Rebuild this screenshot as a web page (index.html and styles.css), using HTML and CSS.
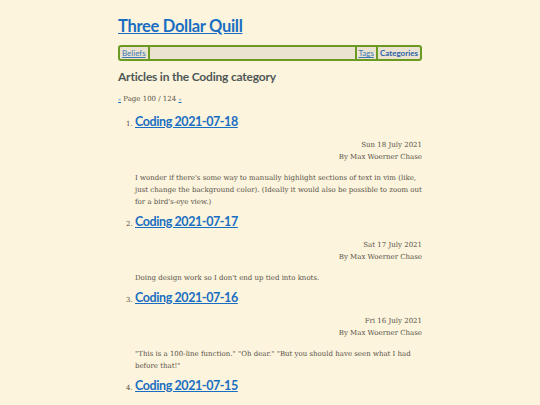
FILE: index.html
```html
<!DOCTYPE html>
<html>
<head>
<meta charset="utf-8">
<link rel="stylesheet" href="styles.css">
</head>
<body>
<div class="page">
  <header class="site-header">
    <h1 class="site-title"><a href="#">Three Dollar Quill</a></h1>
    <nav class="nav">
      <a class="nav-item" href="#">Beliefs</a>
      <span class="nav-spacer"></span>
      <a class="nav-item nav-left" href="#">Tags</a>
      <a class="nav-item nav-left current" href="#">Categories</a>
    </nav>
  </header>
  <h2 class="section-title">Articles in the Coding category</h2>
  <p class="pager"><a href="#">«</a> Page 100 / 124 <a href="#">»</a></p>
  <ol class="articles">
    <li class="article">
      <h3 class="article-title"><a href="#">Coding 2021-07-18</a></h3>
      <div class="meta"><div>Sun 18 July 2021</div><div>By Max Woerner Chase</div></div>
      <p class="summary">I wonder if there's some way to manually highlight sections of text in vim (like, just change the background color). (Ideally it would also be possible to zoom out for a bird's-eye view.)</p>
    </li>
    <li class="article">
      <h3 class="article-title"><a href="#">Coding 2021-07-17</a></h3>
      <div class="meta"><div>Sat 17 July 2021</div><div>By Max Woerner Chase</div></div>
      <p class="summary">Doing design work so I don't end up tied into knots.</p>
    </li>
    <li class="article">
      <h3 class="article-title"><a href="#">Coding 2021-07-16</a></h3>
      <div class="meta"><div>Fri 16 July 2021</div><div>By Max Woerner Chase</div></div>
      <p class="summary">"This is a 100-line function." "Oh dear." "But you should have seen what I had before that!"</p>
    </li>
    <li class="article">
      <h3 class="article-title"><a href="#">Coding 2021-07-15</a></h3>
      <div class="meta"><div>Thu 15 July 2021</div><div>By Max Woerner Chase</div></div>
    </li>
  </ol>
</div>
</body>
</html>
```
FILE: styles.css
```css
html, body {
  margin: 0;
  padding: 0;
  background: #fcf4dc;
}
body {
  font-family: "DejaVu Serif", serif;
  color: #57524a;
  font-size: 7px;
}
.page {
  width: 304px;
  margin: 0 auto;
  padding-top: 14px;
}
a { color: #1a6ec2; }
.site-title {
  margin: 0;
  font-family: Lato, sans-serif;
  font-weight: 700;
  font-size: 16.5px;
  letter-spacing: -0.3px;
  line-height: 24px;
}
.nav {
  margin-top: 7px;
  display: flex;
  align-items: center;
  height: 12px;
  border: 2px solid #6b9a22;
  border-radius: 3px;
  background: #ebe3cf;
  font-family: Lato, sans-serif;
  font-size: 8px;
}
.nav-item {
  padding: 0 2px;
  line-height: 12px;
  color: #3a78b8;
}
.nav-item:first-child {
  border-right: 2px solid #6b9a22;
}
.nav-left {
  border-left: 2px solid #6b9a22;
}
.nav-spacer { flex: 1; }
.current {
  font-weight: 700;
  text-decoration: none;
  color: #2a62a8;
}
.section-title {
  margin: 8px 0 0;
  font-family: Lato, sans-serif;
  font-weight: 700;
  font-size: 12px;
  letter-spacing: -0.2px;
  line-height: 16px;
  color: #4f5858;
}
.pager {
  margin: 8px 0 0;
  font-size: 7px;
  line-height: 12px;
}
.pager a { font-size: 5px; }
.articles {
  margin: 4px 0 0;
  padding-left: 17px;
}
.article::marker {
  font-size: 7px;
}
.article-title {
  margin: 0;
  padding-top: 1.5px;
  font-family: Lato, sans-serif;
  font-weight: 700;
  font-size: 12.5px;
  letter-spacing: -0.4px;
  line-height: 22px;
}
.meta {
  text-align: right;
  line-height: 12px;
  margin-top: 6px;
}
.summary {
  margin: 9px 0 1.5px;
  line-height: 12px;
}
```
